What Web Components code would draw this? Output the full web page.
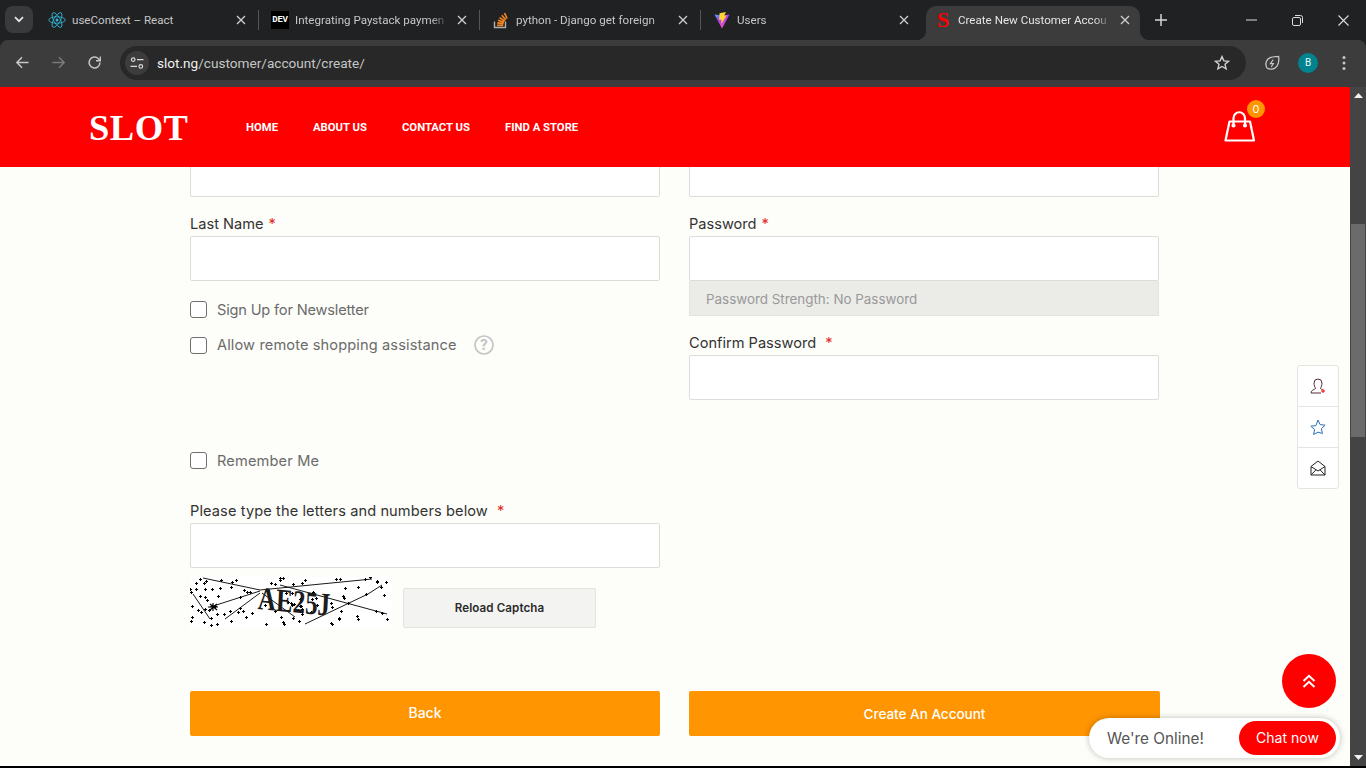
<!DOCTYPE html>
<html lang="en">
<head>
<meta charset="utf-8">
<title>Create New Customer Account</title>
<style>
  html, body { margin: 0; height: 100%; overflow: hidden; background: #000; }
  browser-window { height: 766px; }
</style>
</head>
<body>
<browser-window>
  <tab-strip slot="tabs">
    <browser-tab title="useContext – React" icon="react"></browser-tab>
    <browser-tab title="Integrating Paystack paymen" icon="dev"></browser-tab>
    <browser-tab title="python - Django get foreign" icon="so"></browser-tab>
    <browser-tab title="Users" icon="vite"></browser-tab>
    <browser-tab title="Create New Customer Accou" icon="slot" active></browser-tab>
  </tab-strip>
  <address-bar slot="toolbar"></address-bar>
  <site-page slot="page">
    <site-header></site-header>
    <account-form></account-form>
    <side-rail></side-rail>
    <to-top></to-top>
    <chat-widget></chat-widget>
  </site-page>
</browser-window>

<script>
const icons = {
  react: `<svg width="18" height="18" viewBox="-12 -12 24 24" fill="none" stroke="#35b6d8" stroke-width="1.1"><circle r="2" fill="#35b6d8" stroke="none"/><ellipse rx="11" ry="4.3"/><ellipse rx="11" ry="4.3" transform="rotate(60)"/><ellipse rx="11" ry="4.3" transform="rotate(120)"/></svg>`,
  dev: `<span class="dev">DEV</span>`,
  so: `<svg width="18" height="18" viewBox="0 0 18 18" fill="none"><path d="M2.500 10.500v6h11v-6" stroke="#b0b0b0" stroke-width="1.4"/><path d="M5 14.300h6.200M5.300 11.800l6.300.9M6 9.200l6 2M7.500 6.600l5.300 3.400M9.800 4.200l4 4.500M12.500 2l2.600 5.500" stroke="#f6851f" stroke-width="1.7"/></svg>`,
  vite: `<svg width="18" height="18" viewBox="0 0 18 18"><defs><linearGradient id="v" x1="0" y1="0" x2=".6" y2="1"><stop offset="0" stop-color="#38b6ff"/><stop offset=".4" stop-color="#a63cf5"/><stop offset="1" stop-color="#ff4fc0"/></linearGradient></defs><path d="M1.500 3.500 9 17.500 16.500 3.500 9 4.500z" fill="url(#v)"/><path d="M13 1 6.500 2.200 6.200 9l2.300-.5-.4 4.500 5.800-8.800-2.800.5z" fill="#ffd62e"/></svg>`,
  slot: `<span class="slot-s">S</span>`
};

class BrowserWindow extends HTMLElement {
  constructor() {
    super();
    this.attachShadow({ mode: 'open' });
  }
  connectedCallback() {
    this.shadowRoot.innerHTML = `
      <style>
        :host { display: flex; flex-direction: column; width: 1366px; background: #1f2122; }
        .page { flex: 1; min-height: 0; display: flex; }
      </style>
      <slot name="tabs"></slot>
      <slot name="toolbar"></slot>
      <div class="page"><slot name="page"></slot></div>
    `;
  }
}
customElements.define('browser-window', BrowserWindow);

class TabStrip extends HTMLElement {
  constructor() {
    super();
    this.attachShadow({ mode: 'open' });
  }
  connectedCallback() {
    this.shadowRoot.innerHTML = `
      <style>
        :host { display: flex; height: 40px; background: #1f2122; color: #c7c7c7; box-sizing: border-box; }
        .menu { width: 28px; height: 27px; margin: 6px 5px 0; border-radius: 8px; background: #383a3b; display: flex; align-items: center; justify-content: center; flex: none; }
        .tabs { display: flex; }
        .plus { width: 42px; display: flex; align-items: center; justify-content: center; flex: none; }
        .controls { margin-left: auto; display: flex; }
        .controls div { width: 46px; display: flex; align-items: center; justify-content: center; }
      </style>
      <div class="menu"><svg width="10" height="7" viewBox="0 0 10 7" fill="none" stroke="#e6e6e6" stroke-width="1.7"><path d="M1 1.200 5 5.200 9 1.200"/></svg></div>
      <div class="tabs"><slot></slot></div>
      <div class="plus"><svg width="12" height="12" viewBox="0 0 12 12" stroke="#d5d5d5" stroke-width="1.5"><path d="M6 0v12M0 6h12"/></svg></div>
      <div class="controls">
        <div><svg width="11" height="2" stroke="#dcdcdc"><path d="M0 1h11"/></svg></div>
        <div><svg width="11" height="11" viewBox="0 0 11 11" fill="none" stroke="#dcdcdc"><rect x=".5" y="2.500" width="8" height="8" rx="1.400"/><path d="M3 .5h5.500a2 2 0 0 1 2 2V8"/></svg></div>
        <div><svg width="11" height="11" viewBox="0 0 11 11" stroke="#dcdcdc" stroke-width="1.100"><path d="M.5.5l10 10M10.500.5l-10 10"/></svg></div>
      </div>
    `;
  }
}
customElements.define('tab-strip', TabStrip);

class BrowserTab extends HTMLElement {
  constructor() {
    super();
    this.attachShadow({ mode: 'open' });
  }
  connectedCallback() {
    const active = this.hasAttribute('active');
    this.shadowRoot.innerHTML = `
      <style>
        :host { display: flex; align-items: center; width: ${active ? 214 : 221}px; height: 34px; margin-top: 6px; box-sizing: border-box; padding: 0 13px 6px 12px; position: relative; font: 11.6px "Roboto", "Liberation Sans", sans-serif; flex: none; }
        :host(:first-child) { padding-left: 10px; }
        :host([active]) { background: #3c3c3c; border-radius: 10px 10px 0 0; margin-left: 4px; padding: 0 10px 6px 8px; color: #e4e4e4; }
        :host(:not([active]))::after { content: ""; position: absolute; right: 0; top: 4px; height: 20px; width: 1px; background: #54575a; }
        :host(:nth-last-child(2))::after { display: none; }
        :host([active])::before, :host([active])::after { content: ""; position: absolute; bottom: 0; width: 10px; height: 10px; }
        :host([active])::before { left: -10px; background: radial-gradient(circle at 0 0, transparent 10px, #3c3c3c 10.5px); }
        :host([active])::after { right: -10px; background: radial-gradient(circle at 100% 0, transparent 10px, #3c3c3c 10.5px); }
        .ico { width: 18px; height: 18px; flex: none; margin-right: 6px; display: flex; align-items: center; justify-content: center; }
        .title { flex: 1; white-space: nowrap; overflow: hidden; -webkit-mask-image: linear-gradient(90deg, #000 88%, transparent); mask-image: linear-gradient(90deg, #000 88%, transparent); }
        :host(:first-child) .title { -webkit-mask-image: none; mask-image: none; }
        .close { width: 10px; height: 10px; flex: none; margin-left: 8px; }
        .dev { background: #000; color: #fff; font: bold 9px "Liberation Mono", monospace; width: 18px; height: 18px; display: flex; align-items: center; justify-content: center; letter-spacing: -.3px; }
        .slot-s { color: #f00; font: bold 22px/18px "Liberation Serif", serif; }
      </style>
      <span class="ico">${icons[this.getAttribute('icon')]}</span>
      <span class="title">${this.getAttribute('title')}</span>
      <svg class="close" viewBox="0 0 10 10" stroke="#d0d0d0" stroke-width="1.3"><path d="M1 1l8 8M9 1l-8 8"/></svg>
    `;
  }
}
customElements.define('browser-tab', BrowserTab);

class AddressBar extends HTMLElement {
  constructor() {
    super();
    this.attachShadow({ mode: 'open' });
  }
  connectedCallback() {
    this.shadowRoot.innerHTML = `
      <style>
        :host { display: flex; align-items: center; height: 47px; background: #3c3c3c; box-sizing: border-box; padding-bottom: 2px; border-radius: 8px 8px 0 0; }
        .nav { display: flex; width: 120px; flex: none; padding-left: 15px; gap: 21px; box-sizing: border-box; }
        .nav svg { width: 15px; height: 15px; flex: none; }
        .omni { width: 1126px; height: 34px; background: #282828; border-radius: 17px; display: flex; align-items: center; flex: none; box-sizing: border-box; padding-left: 5px; font: 13.6px "Roboto", "Liberation Sans", sans-serif; color: #c4c7c5; }
        .tune { width: 24px; height: 24px; border-radius: 50%; background: #3c3c3c; display: flex; align-items: center; justify-content: center; margin-right: 8px; }
        .url { padding-top: 1px; }
        .host { color: #f1f1f1; }
        .star { margin-left: auto; margin-right: 16px; }
        .right { display: flex; align-items: center; flex: 1; padding-left: 18px; }
        .avatar { width: 20px; height: 20px; border-radius: 50%; background: #00838f; color: #e8f7f8; font: 10px "Roboto", sans-serif; display: flex; align-items: center; justify-content: center; margin-left: 18px; }
        .dots { margin-left: 24px; }
      </style>
      <div class="nav">
        <svg viewBox="0 0 16 16" fill="none" stroke="#c7c7c7" stroke-width="1.6"><path d="M14.500 8H2M7.500 2.500 2 8l5.500 5.500"/></svg>
        <svg viewBox="0 0 16 16" fill="none" stroke="#7a7a7a" stroke-width="1.6"><path d="M1.500 8H14M8.500 2.500 14 8l-5.500 5.500"/></svg>
        <svg viewBox="0 0 16 16" fill="none" stroke="#c7c7c7" stroke-width="1.6"><path d="M13.800 8a5.800 5.800 0 1 1-1.700-4.100L14 5.800"/><path d="M14.200 1.500v4.600H9.600" stroke-width="1.400"/></svg>
      </div>
      <div class="omni">
        <span class="tune"><svg width="14" height="14" viewBox="0 0 14 14" fill="none" stroke="#d8d8d8" stroke-width="1.2"><circle cx="3.200" cy="3.600" r="1.800"/><path d="M7 3.600h6.500M.5 10.400H7"/><circle cx="10.800" cy="10.400" r="1.800"/></svg></span>
        <span class="url"><span class="host">slot.ng</span>/customer/account/create/</span>
        <svg class="star" width="16" height="16" viewBox="0 0 16 16" fill="none" stroke="#d0d0d0" stroke-width="1.4"><path d="M8 1.600l1.900 4.300 4.600.4-3.500 3 1.100 4.600L8 11.500l-4.100 2.400L5 9.300l-3.500-3 4.600-.4z"/></svg>
      </div>
      <div class="right">
        <svg width="16" height="16" viewBox="0 0 16 16" fill="none" stroke="#c7c7c7" stroke-width="1.3"><path d="M3 13C.8 9.500 2 4.200 6.200 2.600 9 1.600 12.500 1.800 14.600 1.400c.4 3 .4 7-1.600 9.800-2.300 3.200-7 3.800-10 1.800z"/><path d="M9.200 4.600 6.400 8.600h3L7.200 12" stroke-width="1.100"/></svg>
        <span class="avatar">B</span>
        <svg class="dots" width="4" height="16" viewBox="0 0 4 16" fill="#c7c7c7"><circle cx="2" cy="2.500" r="1.500"/><circle cx="2" cy="8" r="1.500"/><circle cx="2" cy="13.500" r="1.500"/></svg>
      </div>
    `;
  }
}
customElements.define('address-bar', AddressBar);

class SitePage extends HTMLElement {
  constructor() {
    super();
    this.attachShadow({ mode: 'open' });
  }
  connectedCallback() {
    this.shadowRoot.innerHTML = `
      <style>
        :host { display: flex; flex: 1; width: 1366px; height: 679px; }
        .view { width: 1350px; position: relative; overflow: hidden; background: #fdfdf9; display: flex; flex-direction: column; }
        .bar { width: 16px; background: #444; position: relative; flex: none; display: flex; flex-direction: column; justify-content: space-between; align-items: center; padding: 6px 0; box-sizing: border-box; }
        .thumb { position: absolute; left: 1px; right: 1px; top: 137px; height: 213px; background: #6b6b6b; }
      </style>
      <div class="view"><slot></slot></div>
      <div class="bar">
        <svg width="9" height="5"><path d="M0 5 4.500 0 9 5z" fill="#f2f2f2"/></svg>
        <div class="thumb"></div>
        <svg width="9" height="5"><path d="M0 0 4.500 5 9 0z" fill="#f2f2f2"/></svg>
      </div>
    `;
  }
}
customElements.define('site-page', SitePage);

class SiteHeader extends HTMLElement {
  constructor() {
    super();
    this.attachShadow({ mode: 'open' });
  }
  connectedCallback() {
    this.shadowRoot.innerHTML = `
      <style>
        :host { display: flex; align-items: center; height: 80px; flex: none; background: #f00; color: #fff; box-sizing: border-box; padding: 0 94px 0 89px; position: relative; z-index: 2; }
        .logo { font: bold 36.5px "Liberation Serif", serif; letter-spacing: .5px; width: 157px; flex: none; }
        nav { display: flex; gap: 35px; font: bold 11.3px "Roboto", "Liberation Sans", sans-serif; }
        nav a { color: #fff; text-decoration: none; }
        .cart { margin-left: auto; position: relative; width: 32px; height: 32px; }
        .badge { position: absolute; left: 23px; top: -11px; width: 18px; height: 18px; border-radius: 50%; background: #ff9500; font: 11px/18px "Inter", sans-serif; text-align: center; }
      </style>
      <div class="logo">SLOT</div>
      <nav><a>HOME</a><a>ABOUT US</a><a>CONTACT US</a><a>FIND A STORE</a></nav>
      <div class="cart">
        <svg width="32" height="32" viewBox="0 0 32 32" fill="none" stroke="#fff" stroke-width="2.2" stroke-linejoin="round" stroke-linecap="round"><path d="M5.500 10.500h20.500l4 19H1.500z"/><path d="M9.500 14.500V7a5.700 5.700 0 0 1 11.500 0v7.500"/><circle cx="9.500" cy="14.500" r="1" fill="#fff"/><circle cx="21" cy="14.500" r="1" fill="#fff"/></svg>
        <span class="badge">0</span>
      </div>
    `;
  }
}
customElements.define('site-header', SiteHeader);

class FormField extends HTMLElement {
  constructor() {
    super();
    this.attachShadow({ mode: 'open' });
  }
  connectedCallback() {
    const label = this.getAttribute('label');
    this.shadowRoot.innerHTML = `
      <style>
        :host { display: block; font: 14.6px "Inter", "Liberation Sans", sans-serif; color: #333; }
        .label { height: 20px; line-height: 20px; margin-bottom: 2px; display: ${label ? 'block' : 'none'}; }
        .req { color: #e02b27; margin-left: var(--req-gap, 5px); }
        .box { height: 43px; border: 1px solid #dcdcd8; border-radius: 2px; background: #fff; }
      </style>
      <div class="label">${label || ''}<span class="req">*</span></div>
      <div class="box"></div>
      <slot></slot>
    `;
  }
}
customElements.define('form-field', FormField);

class CheckRow extends HTMLElement {
  constructor() {
    super();
    this.attachShadow({ mode: 'open' });
  }
  connectedCallback() {
    this.shadowRoot.innerHTML = `
      <style>
        :host { display: flex; align-items: center; height: 20px; font: 14.6px "Inter", "Liberation Sans", sans-serif; color: #6b6b6b; }
        .box { width: 15px; height: 15px; border: 1px solid #6f6f6f; border-radius: 3px; background: #fff; margin-right: 10px; flex: none; }
        .text { padding-top: 1px; }
      </style>
      <span class="box"></span>
      <span class="text"><slot></slot></span>
    `;
  }
}
customElements.define('check-row', CheckRow);

class CaptchaImage extends HTMLElement {
  constructor() {
    super();
    this.attachShadow({ mode: 'open' });
  }
  connectedCallback() {
    // bruit du captcha, suite fixe pour avoir toujours le meme dessin
    let seed = 17;
    const rnd = () => (seed = (seed * 16807) % 2147483647) / 2147483647;
    let dots = '';
    for (let i = 0; i < 105; i++) {
      const x = Math.round(rnd() * 198), y = Math.round(rnd() * 49);
      dots += `M${x - 1} ${y + .5}h3M${x + .5} ${y - 1}v3`;
    }
    this.shadowRoot.innerHTML = `
      <style>
        :host { display: block; width: 202px; height: 51px; flex: none; position: relative; background: #fff; overflow: hidden; }
        svg { position: absolute; inset: 0; }
        .code { position: absolute; left: 68px; top: 11px; font: bold 25px "Liberation Serif", serif; letter-spacing: 0; color: #1c1c1c; transform: scaleY(1.3) rotate(4deg); }
      </style>
      <svg width="202" height="51" fill="none" stroke="#000">
        <path d="${dots}" stroke-width="1"/>
        <path d="M13 1 70 13 182 2M20 30 70 14M3 17 20 42M35 42 70 16M90 8 197 37M115 47 178 17 192 8M72 16 105 40" stroke-width=".9"/>
        <path d="M20 27l7 6M27 27l-7 6M23 26v8M18 30h10" stroke-width="1.2"/>
      </svg>
      <span class="code">AE25J</span>
    `;
  }
}
customElements.define('captcha-image', CaptchaImage);

class AccountForm extends HTMLElement {
  constructor() {
    super();
    this.attachShadow({ mode: 'open' });
  }
  connectedCallback() {
    this.shadowRoot.innerHTML = `
      <style>
        :host { display: block; padding: 0 190px; margin-top: -15px; font: 14.6px "Inter", "Liberation Sans", sans-serif; color: #333; }
        .cols { display: grid; grid-template-columns: 470px 470px; column-gap: 29px; }
        .col > * { margin-bottom: 17px; }
        .strength { height: 35px; box-sizing: border-box; background: #ebebe8; border: 1px solid #e2e2de; border-top: 0; padding-left: 16px; line-height: 36px; color: #999; font-size: 13.4px; }
        .checks { display: flex; flex-direction: column; gap: 16px; margin-top: 18px; }
        .help { margin-left: 17px; vertical-align: middle; margin-top: -3px; }
        .remember { margin: 79px 0 14px; }
        .cap { display: flex; align-items: flex-end; margin-top: 9px; gap: 11px; }
        .reload { width: 193px; height: 40px; box-sizing: border-box; background: #f3f3f1; border: 1px solid #e2e2de; border-radius: 2px; font: 600 11.6px/38px "Inter", sans-serif; text-align: center; color: #2a2a2a; }
        .actions { display: grid; grid-template-columns: 470px 471px; column-gap: 29px; margin-top: 46px; }
        .btn { height: 45px; background: #ff9500; border-radius: 2px; color: #fff; text-align: center; font: 500 14px/44px "Inter", sans-serif; }
        .btn + .btn { font-size: 13.5px; line-height: 46px; }
      </style>
      <div class="cols">
        <div class="col">
          <form-field></form-field>
          <form-field label="Last Name"></form-field>
          <div class="checks">
            <check-row style="letter-spacing:-.18px">Sign Up for Newsletter</check-row>
            <check-row style="letter-spacing:.12px">Allow remote shopping assistance<svg class="help" width="20" height="20" viewBox="0 0 20 20" fill="none"><circle cx="10" cy="10" r="9" stroke="#c4c4c4" stroke-width="1.7"/><text x="10" y="15" text-anchor="middle" font-family="Inter, sans-serif" font-weight="700" font-size="14" fill="#c4c4c4" stroke="none">?</text></svg></check-row>
            <check-row class="remember" style="letter-spacing:.15px">Remember Me</check-row>
          </div>
          <form-field label="Please type the letters and numbers below" style="--req-gap:9px;letter-spacing:.1px">
            <div class="cap"><captcha-image></captcha-image><div class="reload">Reload Captcha</div></div>
          </form-field>
        </div>
        <div class="col">
          <form-field></form-field>
          <form-field label="Password"><div class="strength">Password Strength: No Password</div></form-field>
          <form-field label="Confirm Password" style="--req-gap:9px"></form-field>
        </div>
      </div>
      <div class="actions"><div class="btn">Back</div><div class="btn">Create An Account</div></div>
    `;
  }
}
customElements.define('account-form', AccountForm);

class SideRail extends HTMLElement {
  constructor() {
    super();
    this.attachShadow({ mode: 'open' });
  }
  connectedCallback() {
    this.shadowRoot.innerHTML = `
      <style>
        :host { position: absolute; left: 1297px; top: 278px; width: 42px; box-sizing: border-box; border: 1px solid #e4e4e0; border-radius: 3px; background: #fff; display: flex; flex-direction: column; }
        div { height: 40px; display: flex; align-items: center; justify-content: center; }
        div + div { border-top: 1px solid #e4e4e0; }
      </style>
      <div><svg width="16" height="16" viewBox="0 0 16 16" fill="none" stroke="#5a2a3a"><path d="M1 15c0-3 3-3 4.500-4.500C5 9 4 7.500 4 5a4 4 0 0 1 8 0c0 2.500-1 4-1.500 5.500.5.5 1 .7 2 1"/><path d="M1 15h10"/><path d="M11 13h4M13 11v4" stroke="#e00"/></svg></div>
      <div><svg width="16" height="16" viewBox="0 0 16 16" fill="none" stroke="#2a6fb8"><path d="M8 1l2.100 4.600 5 .6-3.700 3.400 1 4.900L8 13.100l-4.400 2.400 1-4.900L.9 7.200l5-.6z"/></svg></div>
      <div><svg width="16" height="16" viewBox="0 0 16 16" fill="none" stroke="#222"><path d="M1 6.500 8 1l7 5.500V15H1z"/><path d="M1 6.500 8 11l7-4.500M1 15l5-5.200M15 15l-5-5.200"/></svg></div>
    `;
  }
}
customElements.define('side-rail', SideRail);

class ToTop extends HTMLElement {
  constructor() {
    super();
    this.attachShadow({ mode: 'open' });
  }
  connectedCallback() {
    this.shadowRoot.innerHTML = `
      <style>
        :host { position: absolute; left: 1282px; top: 567px; width: 54px; height: 54px; border-radius: 50%; background: #f00; display: flex; align-items: center; justify-content: center; }
      </style>
      <svg width="14" height="15" viewBox="0 0 14 15" fill="none" stroke="#fff" stroke-width="2"><path d="M1.500 7 7 1.800 12.500 7M1.500 13 7 7.800 12.500 13"/></svg>
    `;
  }
}
customElements.define('to-top', ToTop);

class ChatWidget extends HTMLElement {
  constructor() {
    super();
    this.attachShadow({ mode: 'open' });
  }
  connectedCallback() {
    this.shadowRoot.innerHTML = `
      <style>
        :host { position: absolute; left: 1089px; top: 631px; width: 251px; height: 40px; box-sizing: border-box; border-radius: 20px; background: #fff; box-shadow: 0 0 6px rgba(0,0,0,.25); display: flex; align-items: center; justify-content: space-between; padding: 0 4px 0 18px; font: 15.3px "Inter", "Liberation Sans", sans-serif; color: #555; }
        .now { width: 97px; height: 34px; border-radius: 17px; background: #f00; color: #fff; text-align: center; line-height: 33px; font-size: 14px; }
      </style>
      <span>We're Online!</span>
      <span class="now">Chat now</span>
    `;
  }
}
customElements.define('chat-widget', ChatWidget);
</script>
</body>
</html>
